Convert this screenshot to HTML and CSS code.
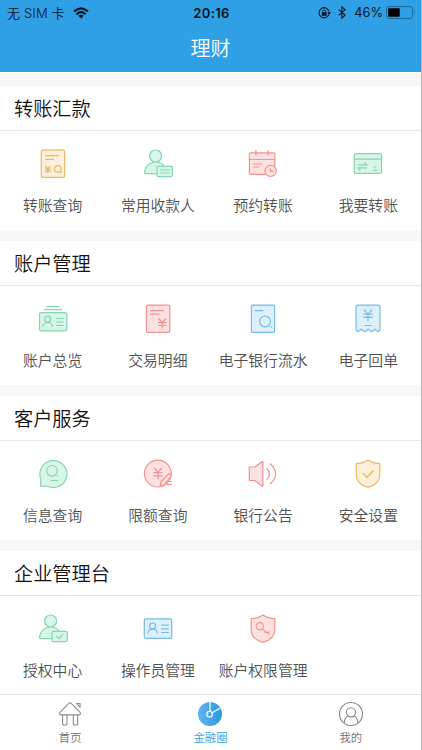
FILE: index.html
```html
<!DOCTYPE html>
<html lang="zh-CN">
<head>
<meta charset="utf-8">
<title>理财</title>
<link rel="stylesheet" href="styles.css">
</head>
<body>
<div class="app">
  <header class="header">
    <div class="status">
      <div class="status-left"><span>无 SIM 卡</span>
        <svg class="wifi" viewBox="0 0 16 12"><g fill="none" stroke="#06131d" stroke-width="2"><path d="M1 4.6Q8-1.8 15 4.6"/><path d="M3.4 7.2Q8 3 12.6 7.2"/></g><path d="M5.3 8.8Q8 6.6 10.7 8.8L8 11.6Z" fill="#06131d"/></svg>
      </div>
      <div class="status-time">20:16</div>
      <div class="status-right">
        <svg class="lock" viewBox="0 0 13 12"><path d="M10.8 7.8A5.1 5.1 0 1 1 11 4.3" fill="none" stroke="#06131d" stroke-width="1.1"/><path d="M9.2 5.2h3.8l-1.9 2.5z" fill="#06131d"/><rect x="3.8" y="5.2" width="4.8" height="3.6" rx=".4" fill="#06131d"/><path d="M4.8 5.4V4.3a1.4 1.4 0 0 1 2.8 0v1.1" fill="none" stroke="#06131d" stroke-width=".9"/></svg>
        <svg class="bt" viewBox="0 0 8 13"><path d="M.7 3.6l6.4 5.6-3.2 2.9V.9l3.2 2.9L.7 9.4" fill="none" stroke="#06131d" stroke-width="1.1"/></svg>
        <span class="pct">46%</span>
        <svg class="battery" viewBox="0 0 30 13"><rect x=".6" y=".6" width="26" height="11.8" rx="2.6" fill="none" stroke="#1b6799" stroke-width="1"/><rect x="2.2" y="2.3" width="11.5" height="8.4" rx=".8" fill="#000"/><path d="M28 4.3q1.6 2.2 0 4.4z" fill="#1b6799"/></svg>
      </div>
    </div>
    <h1 class="title">理财</h1>
  </header>
  <main class="content">
    <section class="card">
      <h2>转账汇款</h2>
      <div class="grid">
        <a class="item orange"><svg viewBox="0 0 30 30"><rect class="f" x="3.3" y="1.1" width="23.4" height="27.2" rx="1.4"/><path d="M7 6.7h14M7 10.3h9M7.3 17l2.5 3 2.5-3M9.8 20v4M7 20.3h5.6M7 22.3h5.6"/><circle cx="19.8" cy="19.9" r="3.3"/><path d="M22.4 22.7l1.2 1.1"/></svg><span>转账查询</span></a>
        <a class="item green"><svg viewBox="0 0 30 30"><circle class="f" cx="12.6" cy="7" r="6"/><path class="f" d="M3 24.6h-.3q-1.4 0-1.2-1.5C2.2 17.2 6.7 13 12.6 13q6 0 9 4.6v7z"/><rect class="f" x="14" y="17.4" width="15.4" height="10.2" rx="1.4"/><path d="M16.8 21h9.9M16.8 24h9.9"/></svg><span>常用收款人</span></a>
        <a class="item red"><svg viewBox="0 0 30 30"><rect class="f" x="1.4" y="3.8" width="25.4" height="21.6" rx="1.4"/><path d="M1.4 10.5h25.4M7.9 1v5.5M20.1 1v5.5M4.8 15h9.4M4.8 18h6.4"/><circle class="f" cx="22.6" cy="21.9" r="5.6"/><path d="M22.4 19.3v3h3"/></svg><span>预约转账</span></a>
        <a class="item green"><svg viewBox="0 0 30 30"><rect class="f" x="1.3" y="4.7" width="27.2" height="19.7" rx="1.4"/><path d="M1.3 10.2h27.2M5 16.2h9l-2.6-2.7M13.8 18.8h-9l2.6 2.7M19.8 18h3.7M19.8 21.2h4.6"/></svg><span>我要转账</span></a>
      </div>
    </section>
    <section class="card">
      <h2>账户管理</h2>
      <div class="grid">
        <a class="item green"><svg viewBox="0 0 30 30"><path d="M8.5 2.7h13M6 5.6h18"/><rect class="f" x="1.5" y="8.6" width="27.3" height="18.2" rx="1.8"/><circle cx="9.6" cy="15.2" r="3"/><path d="M4.7 23q.5-4.5 4.9-4.5t4.9 4.5M18 14.5h7.7M18 18h7.7M18 21.5h7.7"/></svg><span>账户总览</span></a>
        <a class="item red"><svg viewBox="0 0 30 30"><rect class="f" x="3.4" y="1.1" width="23.4" height="27.2" rx="1.4"/><path d="M7 6.7h14M7 10.2h9.5M15.5 14.5l3.7 4 3.7-4M19.2 18.5v6.3M15 18.6h8.4M15 21.5h8.4"/></svg><span>交易明细</span></a>
        <a class="item blue"><svg viewBox="0 0 30 30"><rect class="f" x="3.4" y="1.1" width="23.2" height="27.2" rx="1.4"/><path d="M6.7 6.7h8.6M22.8 22.4l1.1 1"/><circle cx="17.1" cy="17.4" r="5.4"/></svg><span>电子银行流水</span></a>
        <a class="item blue"><svg viewBox="0 0 30 30"><path class="f" d="M3 26V2.4Q3 1.1 4.3 1.1h21.4Q27 1.1 27 2.4V26l-2 1.7-3-2.5-3.3 2.5-3.6-2.5-3.4 2.5-3.5-2.5-3 2.5z"/><path d="M11 5.7l4 4.4 4-4.4M15 10.1v7.1M10.4 10.2h9.2M10.4 13.3h9.2M11.5 21.5h7.3"/></svg><span>电子回单</span></a>
      </div>
    </section>
    <section class="card">
      <h2>客户服务</h2>
      <div class="grid">
        <a class="item green"><svg viewBox="0 0 30 30"><path class="f" d="M3 20.5A13.5 13.5 0 1 1 9 27l-5.4.4q-1.3 0-1.1-1.2z"/><circle cx="14" cy="11.8" r="5.3"/><path d="M19 16.5l1 1M13 21.5h7.3"/></svg><span>信息查询</span></a>
        <a class="item red"><svg viewBox="0 0 30 30"><circle class="f" cx="14.8" cy="14.6" r="13.4"/><path d="M11.2 9l3.8 4.4L18.8 9M15 13.4v7.2M10.3 13.6h9.4M10.3 16.8h9.4"/><path class="f" d="M17 27.5l1.2-5 7-7.2q1.1-1 2.4 0 1.1 1.2.2 2.4l-6.4 8.2z"/><path d="M26.3 22.5h2.6M24 25.6h4.9"/></svg><span>限额查询</span></a>
        <a class="item red"><svg viewBox="0 0 30 30"><path class="f" d="M1.3 8h5.6l7-5.3q1-.5 1 .6v23.1q0 1-1 .5L6.9 21.5H1.3z"/><path d="M18.5 9.3q6 5.7 0 11.3M22 4.5q11.5 10.2 0 20.8"/></svg><span>银行公告</span></a>
        <a class="item orange"><svg viewBox="0 0 30 30"><path class="f" d="M15 1.1Q20 4.6 26.8 4.7V16Q26.8 25 15 28.4 3.2 25 3.2 16V4.7Q10 4.6 15 1.1z"/><path class="bold" d="M9.8 14.2l4.1 4 6.4-6.4"/></svg><span>安全设置</span></a>
      </div>
    </section>
    <section class="card">
      <h2>企业管理台</h2>
      <div class="grid">
        <a class="item green"><svg viewBox="0 0 30 30"><circle class="f" cx="12.6" cy="7" r="6"/><path class="f" d="M3 24.6h-.3q-1.4 0-1.2-1.5C2.2 17.2 6.7 13 12.6 13q6 0 9 4.6v7z"/><rect class="f" x="14" y="17.4" width="15.2" height="10.2" rx="1.4"/><path d="M18.1 22l2.8 2.5 4.3-4.5"/></svg><span>授权中心</span></a>
        <a class="item blue"><svg viewBox="0 0 30 30"><rect class="f" x="1.3" y="4.8" width="27.4" height="19.5" rx="1.4"/><circle cx="9.6" cy="12" r="3"/><path d="M4.9 19.5q.4-4.3 4.7-4.3t4.7 4.3M18.2 11.2h7.5M18.2 14.8h7.5M18.2 18.5h7.5"/></svg><span>操作员管理</span></a>
        <a class="item red"><svg viewBox="0 0 30 30"><path class="f" d="M15 1.1Q20 4.6 26.8 4.7V16Q26.8 25 15 28.4 3.2 25 3.2 16V4.7Q10 4.6 15 1.1z"/><circle cx="11.8" cy="12.3" r="3.6"/><path d="M14.5 15l6.6 5.4M18 17.8l-1.3 1.5M21.4 17.5l-1.6 1.9"/></svg><span>账户权限管理</span></a>
      </div>
    </section>
  </main>
  <nav class="tabs">
    <a class="tab"><svg viewBox="0 0 26 26"><g fill="none" stroke="#8d8d8d" stroke-width="1.1" stroke-linejoin="round"><path d="M12 2.2q1-.8 2 0l9 9.2q1.3 2.1-1 2.5H4q-2.3-.4-1-2.5zM5.6 13.9v8.6q0 1.7 2.2 1.7t2.2-1.7v-8.6M16.3 13.9v8.6q0 1.7 2.2 1.7t2.2-1.7v-8.6M19.5 2.5h3.6v3.7z"/></g></svg><span>首页</span></a>
    <a class="tab active"><svg viewBox="0 0 26 26"><defs><linearGradient id="disc" x1="0" y1="0" x2="1" y2="0"><stop offset="0" stop-color="#62b3ea"/><stop offset="1" stop-color="#2b9be4"/></linearGradient></defs><circle cx="13" cy="13" r="12" fill="url(#disc)"/><g fill="none" stroke="#fff" stroke-width="1.2"><circle cx="12.6" cy="13.2" r="2.8"/><path d="M13 1v9.5M15.1 11.8l8.2-4.7"/></g></svg><span>金融圈</span></a>
    <a class="tab"><svg viewBox="0 0 26 26"><g fill="none" stroke="#858585" stroke-width="1.1"><circle cx="13" cy="13" r="11.5"/><circle cx="13" cy="11.3" r="4.6"/><path d="M6.2 22.2q.5-6.3 4-7.5M19.8 22.2q-.5-6.3-4-7.5"/></g></svg><span>我的</span></a>
  </nav>
</div>
</body>
</html>
```
FILE: styles.css
```css
* { box-sizing: border-box; }

body {
  margin: 0;
  font-family: "Noto Sans CJK SC", sans-serif;
  font-weight: 350;
}

.app {
  width: 422px;
  height: 750px;
  display: flex;
  flex-direction: column;
  overflow: hidden;
  background: #f7f7f7;
  border-right: 1px solid #b4b4b4;
}

.header {
  height: 72px;
  flex: none;
  background: #30a0e6;
}

.status {
  height: 24px;
  display: grid;
  grid-template-columns: 1fr auto 1fr;
  align-items: center;
  padding: 0 5px 0 7px;
  color: #06131d;
  font: 400 13px/24px Inter, "Noto Sans CJK SC", sans-serif;
}

.status-left { display: flex; align-items: center; gap: 8px; font-weight: 350; letter-spacing: .15px; padding-top: 1px; }
.status-time { font-weight: 600; font-size: 13px; letter-spacing: .35px; }
.status-right { display: flex; align-items: center; justify-content: flex-end; }
.wifi { width: 16px; height: 12px; }
.lock { width: 13px; height: 12px; }
.bt { width: 8px; height: 13px; margin-left: 7px; }
.pct { margin-left: 8px; font-size: 12.8px; }
.battery { width: 30px; height: 13px; margin-left: 3px; }

.title {
  margin: 0;
  color: #fff;
  text-align: center;
  font-size: 20px;
  font-weight: 350;
  line-height: 47px;
}

.content {
  flex: 1;
  min-height: 0;
  padding-top: 13px;
  display: flex;
  flex-direction: column;
  gap: 11px;
  border-top: 1px solid #fff;
}

.card {
  flex: none;
  height: 144px;
  background: #fff;
}

.card h2 {
  margin: 0;
  height: 45px;
  padding-left: 14px;
  border-bottom: 1px solid #e8e8e8;
  color: #111;
  font-size: 19.2px;
  font-weight: 350;
  line-height: 44px;
}

.grid {
  display: grid;
  grid-template-columns: repeat(4, 105.25px);
  padding-top: 18px;
}

.item {
  display: flex;
  flex-direction: column;
  align-items: center;
  gap: 15px;
  color: #505050;
  font-size: 14.8px;
  line-height: 22px;
  white-space: nowrap;
}

.item svg {
  width: 30px;
  height: 30px;
  fill: none;
  stroke: var(--line);
  stroke-width: 1.2;
  stroke-linejoin: round;
}

.item .f { fill: var(--fill); }
.item .bold { stroke-width: 1.6; }
.orange { --line: #e9b965; --fill: #fdf0da; }
.green { --line: #86d5b2; --fill: #d8f6e8; }
.red { --line: #f09393; --fill: #fde0e0; }
.blue { --line: #77bde2; --fill: #dceffb; }

.tabs {
  flex: none;
  height: 56px;
  display: grid;
  grid-template-columns: repeat(3, 1fr);
  background: #fff;
  border-top: 1px solid #e4e4e4;
}

.tab {
  display: flex;
  flex-direction: column;
  align-items: center;
  padding-top: 6px;
  color: #707070;
  font-size: 11.3px;
  line-height: 16px;
  gap: 2px;
}

.tab svg { width: 26px; height: 26px; }
.tab.active { color: #36a0e6; }
```
